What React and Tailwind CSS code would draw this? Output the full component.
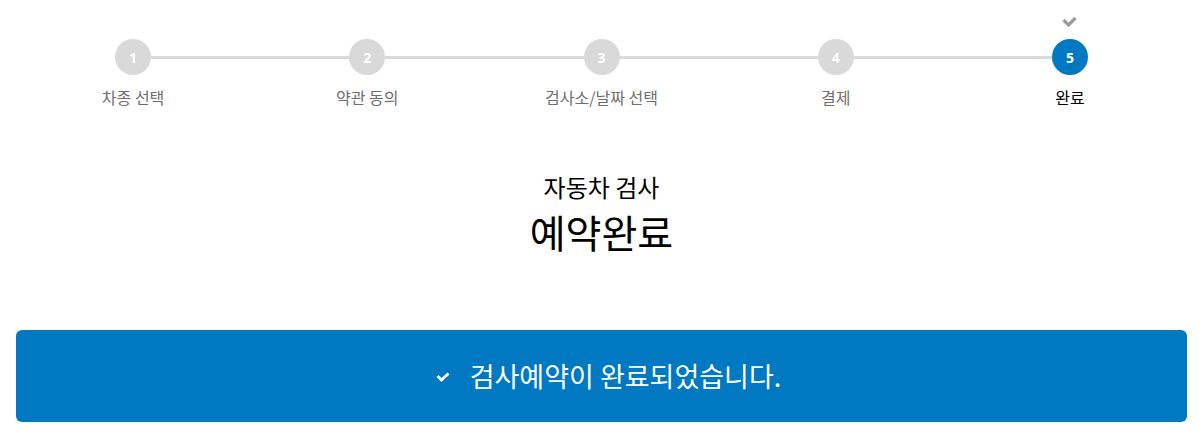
import React from "react";

const steps = ["차종 선택", "약관 동의", "검사소/날짜 선택", "결제", "완료"];
const font = { fontFamily: '"Malgun Gothic", "Noto Sans CJK KR", "Noto Sans", sans-serif' };

export default function App() {
  return (
    <div className="w-[1203px] h-[442px] bg-white px-4" style={font}>
      <div className="h-[39px] flex justify-end items-start">
        <div className="w-[234px] flex justify-center pt-[16px] pr-[1px]">
          <svg viewBox="0 0 15 12" className="w-[15px] h-[12px] text-[#9a9a9a]" fill="none" stroke="currentColor" strokeWidth="3.2">
            <path d="M1.5 4 L6.5 9 L13.5 2" />
          </svg>
        </div>
      </div>
      <div className="flex items-center px-[99px] h-[36px]">
        {steps.map((s, i) => (
          <React.Fragment key={i}>
            <div
              className={`w-[36px] h-[36px] rounded-full flex items-center justify-center text-white text-[14px] font-bold shrink-0 ${
                i === 4 ? "bg-[#0079c2]" : "bg-[#d9d9d9]"
              }`}
              style={{ fontFamily: '"Open Sans", "Liberation Sans", sans-serif' }}
            >
              {i + 1}
            </div>
            {i < 4 && <div className="flex-1 h-[3px] bg-[#dadada]" />}
          </React.Fragment>
        ))}
      </div>
      <div className="grid grid-cols-5 mt-[11px] h-[22px]">
        {steps.map((s, i) => (
          <div
            key={i}
            className={`text-center text-[16px] leading-[22px] ${i === 4 ? "text-black" : "text-[#6e6e6e]"}`}
          >
            {s}
          </div>
        ))}
      </div>
      <div className="flex flex-col items-center mt-[64px]">
        <div className="text-[24px] leading-[30px] text-black">자동차 검사</div>
        <div className="text-[39px] leading-[50px] text-black mt-[4px]">예약완료</div>
      </div>
      <div className="mt-[74px] h-[92px] rounded-[6px] bg-[#0079c2] flex items-center justify-center gap-[20px] pl-[14px] text-white">
        <svg viewBox="0 0 14 11" className="w-[14px] h-[11px] text-white mt-[2px]" fill="none" stroke="currentColor" strokeWidth="3">
          <path d="M1.5 4 L5.5 8 L12.5 1.5" />
        </svg>
        <span className="text-[27px] leading-[32px]">검사예약이 완료되었습니다.</span>
      </div>
    </div>
  );
}
